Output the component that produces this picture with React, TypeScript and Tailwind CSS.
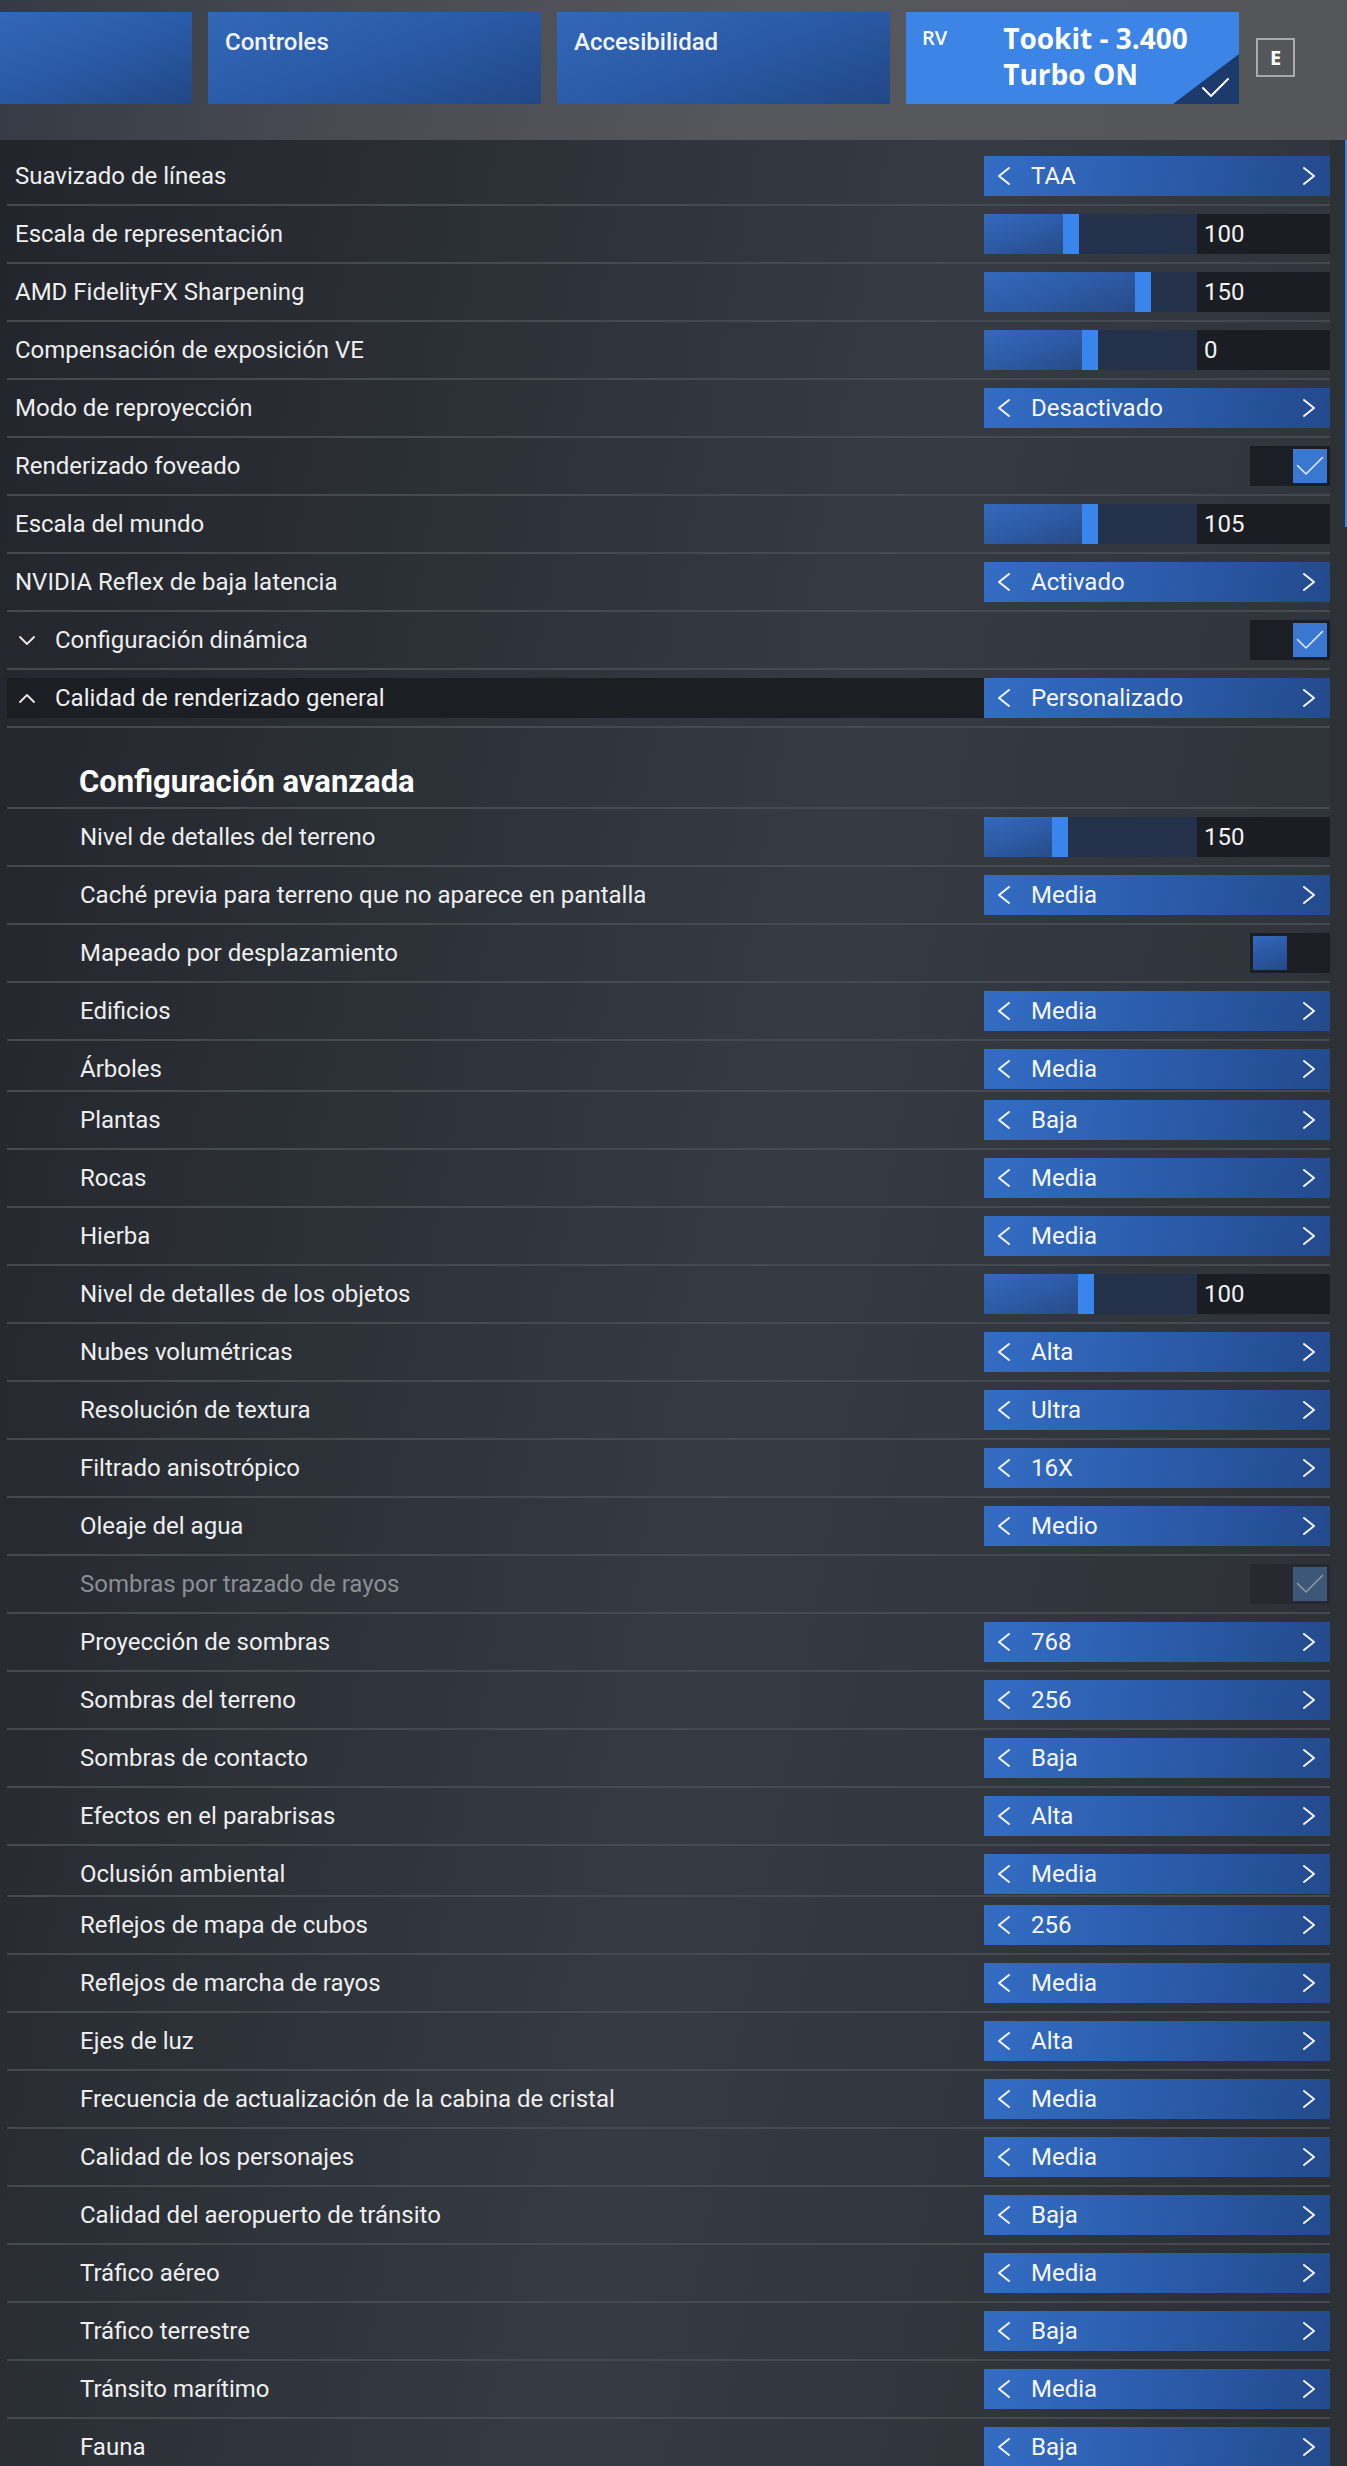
import React from 'react';

type Row =
  | { kind: 'select'; label: string; value: string; indent?: boolean; expand?: 'up' | 'down'; highlight?: boolean; cut?: boolean }
  | { kind: 'slider'; label: string; value: string; pos: number; indent?: boolean }
  | { kind: 'check'; label: string; checked: boolean; indent?: boolean; disabled?: boolean; expand?: 'up' | 'down' }
  | { kind: 'heading'; label: string };

const rows: Row[] = [
  { kind: 'select', label: 'Suavizado de líneas', value: 'TAA' },
  { kind: 'slider', label: 'Escala de representación', value: '100', pos: 79 },
  { kind: 'slider', label: 'AMD FidelityFX Sharpening', value: '150', pos: 151 },
  { kind: 'slider', label: 'Compensación de exposición VE', value: '0', pos: 98 },
  { kind: 'select', label: 'Modo de reproyección', value: 'Desactivado' },
  { kind: 'check', label: 'Renderizado foveado', checked: true },
  { kind: 'slider', label: 'Escala del mundo', value: '105', pos: 98 },
  { kind: 'select', label: 'NVIDIA Reflex de baja latencia', value: 'Activado' },
  { kind: 'check', label: 'Configuración dinámica', checked: true, expand: 'down' },
  { kind: 'select', label: 'Calidad de renderizado general', value: 'Personalizado', expand: 'up', highlight: true },
  { kind: 'heading', label: 'Configuración avanzada' },
  { kind: 'slider', label: 'Nivel de detalles del terreno', value: '150', pos: 68, indent: true },
  { kind: 'select', label: 'Caché previa para terreno que no aparece en pantalla', value: 'Media', indent: true },
  { kind: 'check', label: 'Mapeado por desplazamiento', checked: false, indent: true },
  { kind: 'select', label: 'Edificios', value: 'Media', indent: true },
  { kind: 'select', label: 'Árboles', value: 'Media', indent: true, cut: true },
  { kind: 'select', label: 'Plantas', value: 'Baja', indent: true },
  { kind: 'select', label: 'Rocas', value: 'Media', indent: true },
  { kind: 'select', label: 'Hierba', value: 'Media', indent: true },
  { kind: 'slider', label: 'Nivel de detalles de los objetos', value: '100', pos: 94, indent: true },
  { kind: 'select', label: 'Nubes volumétricas', value: 'Alta', indent: true },
  { kind: 'select', label: 'Resolución de textura', value: 'Ultra', indent: true },
  { kind: 'select', label: 'Filtrado anisotrópico', value: '16X', indent: true },
  { kind: 'select', label: 'Oleaje del agua', value: 'Medio', indent: true },
  { kind: 'check', label: 'Sombras por trazado de rayos', checked: true, indent: true, disabled: true },
  { kind: 'select', label: 'Proyección de sombras', value: '768', indent: true },
  { kind: 'select', label: 'Sombras del terreno', value: '256', indent: true },
  { kind: 'select', label: 'Sombras de contacto', value: 'Baja', indent: true },
  { kind: 'select', label: 'Efectos en el parabrisas', value: 'Alta', indent: true },
  { kind: 'select', label: 'Oclusión ambiental', value: 'Media', indent: true, cut: true },
  { kind: 'select', label: 'Reflejos de mapa de cubos', value: '256', indent: true },
  { kind: 'select', label: 'Reflejos de marcha de rayos', value: 'Media', indent: true },
  { kind: 'select', label: 'Ejes de luz', value: 'Alta', indent: true },
  { kind: 'select', label: 'Frecuencia de actualización de la cabina de cristal', value: 'Media', indent: true },
  { kind: 'select', label: 'Calidad de los personajes', value: 'Media', indent: true },
  { kind: 'select', label: 'Calidad del aeropuerto de tránsito', value: 'Baja', indent: true },
  { kind: 'select', label: 'Tráfico aéreo', value: 'Media', indent: true },
  { kind: 'select', label: 'Tráfico terrestre', value: 'Baja', indent: true },
  { kind: 'select', label: 'Tránsito marítimo', value: 'Media', indent: true },
  { kind: 'select', label: 'Fauna', value: 'Baja', indent: true },
];

const Chevron = ({ dir }: { dir: 'left' | 'right' }) => (
  <svg width="14" height="18" viewBox="0 0 14 18" fill="none" stroke="#f2f5fa" strokeWidth="2" strokeLinecap="round" strokeLinejoin="round">
    {dir === 'left' ? <polyline points="12,1 2,9 12,17" /> : <polyline points="2,1 12,9 2,17" />}
  </svg>
);

const Expand = ({ dir }: { dir: 'up' | 'down' }) => (
  <svg width="18" height="10" viewBox="0 0 18 10" fill="none" stroke="#e8e8e8" strokeWidth="1.8" strokeLinecap="round" strokeLinejoin="round">
    {dir === 'up' ? <polyline points="2,9 9,2 16,9" /> : <polyline points="2,2 9,9 16,2" />}
  </svg>
);

const Check = ({ color }: { color: string }) => (
  <svg width="34" height="34" viewBox="0 0 34 34" fill="none" stroke={color} strokeWidth="1.6" strokeLinecap="round" strokeLinejoin="round">
    <polyline points="4.5,16.5 13,25 29.5,8.5" />
  </svg>
);

const Select = ({ value }: { value: string }) => (
  <div className="w-[346px] h-10 shrink-0 flex items-center bg-[linear-gradient(100deg,#336dc4_0%,#2b5cab_50%,#234a8c_100%)] text-[#f4f6fa]">
    <div className="ml-[13px]">
      <Chevron dir="left" />
    </div>
    <span className="ml-[20px] text-[24px] leading-none">{value}</span>
    <div className="ml-auto mr-[14px]">
      <Chevron dir="right" />
    </div>
  </div>
);

const Slider = ({ value, pos }: { value: string; pos: number }) => (
  <div className="w-[346px] h-10 shrink-0 flex">
    <div className="w-[213px] h-full flex bg-[#24314a]">
      <div className="h-full bg-[linear-gradient(160deg,#3369bd_0%,#2d5ba6_50%,#274b86_100%)]" style={{ width: pos }} />
      <div className="w-4 h-full bg-[#3a85ec]" />
    </div>
    <div className="flex-1 h-full flex items-center pl-[7px] bg-[#1a1d23] text-[24px] text-[#f2f2f2]">{value}</div>
  </div>
);

const Toggle = ({ checked, disabled }: { checked: boolean; disabled?: boolean }) => (
  <div className={`w-20 h-10 shrink-0 flex p-[3px] ${checked ? 'justify-end' : 'justify-start'} ${disabled ? 'bg-[#262930]' : 'bg-[#1b1e24]'}`}>
    {checked ? (
      <div className={`w-[34px] h-[34px] ${disabled ? 'bg-[#3d5779]' : 'bg-[#3a77d0]'}`}>
        <Check color={disabled ? '#8e97a4' : '#dfe8f5'} />
      </div>
    ) : (
      <div className="w-[34px] h-[34px] bg-[linear-gradient(160deg,#3369bd_0%,#2a58a2_50%,#234987_100%)]" />
    )}
  </div>
);

const SettingRow = ({ row }: { row: Row }) => {
  if (row.kind === 'heading') {
    return (
      <div className="ml-[7px] h-[81px] flex items-end pb-[9px] pl-[72px] border-b-2 border-[#454950]">
        <span className="text-[31px] leading-8 font-bold text-white">{row.label}</span>
      </div>
    );
  }
  const cut = row.kind === 'select' && row.cut;
  const highlight = row.kind === 'select' && row.highlight;
  const expand = row.kind !== 'slider' ? row.expand : undefined;
  const disabled = row.kind === 'check' && row.disabled;
  return (
    <div className={`ml-[7px] flex items-start border-b-2 border-[#454950] pt-2 ${cut ? 'pb-px' : 'pb-2'}`}>
      <div className={`flex-1 h-10 flex items-center ${highlight ? 'bg-[#1b1e23]' : ''} ${row.indent ? 'pl-[73px]' : expand ? 'pl-[11px]' : 'pl-2'}`}>
        {expand && (
          <div className="w-[37px] shrink-0">
            <Expand dir={expand} />
          </div>
        )}
        <span className={`text-[24px] leading-none ${disabled ? 'text-[#8b8e94]' : 'text-[#eeeeee]'}`}>{row.label}</span>
      </div>
      {row.kind === 'select' && <Select value={row.value} />}
      {row.kind === 'slider' && <Slider value={row.value} pos={row.pos} />}
      {row.kind === 'check' && <Toggle checked={row.checked} disabled={row.disabled} />}
    </div>
  );
};

const Tab = ({ label, className }: { label: string; className: string }) => (
  <div className={`h-[92px] bg-[linear-gradient(160deg,#3268b8_0%,#2a5aa6_50%,#214785_100%)] px-[17px] pt-[18px] ${className}`}>
    <span className="text-[24px] leading-none font-medium text-[#f0f3f8]">{label}</span>
  </div>
);

export default function App() {
  return (
    <div className="w-[1347px] h-[2466px] overflow-hidden flex flex-col font-['Roboto','Liberation_Sans',sans-serif] bg-[#2c2f35]">
      <header className="h-[140px] shrink-0 pt-3 flex items-start gap-4 bg-[linear-gradient(100deg,#353a44_0%,#474a51_25%,#55575c_55%,#545659_100%)]">
        <Tab label="" className="w-[192px]" />
        <Tab label="Controles" className="w-[333px]" />
        <Tab label="Accesibilidad" className="w-[333px]" />
        <div className="relative w-[333px] h-[92px] bg-[#3c84e6] flex font-['Open_Sans','Liberation_Sans',sans-serif] text-white overflow-hidden">
          <span className="ml-4 mt-[16px] text-[20px] leading-none font-semibold">RV</span>
          <div className="ml-[56px] mt-[8px] text-[28px] leading-9 font-bold">
            <div>Tookit - 3.400</div>
            <div>Turbo ON</div>
          </div>
          <svg className="absolute right-0 bottom-0" width="66" height="50" viewBox="0 0 66 50">
            <polygon points="66,0 66,50 0,50" fill="#1d3a6c" />
            <polyline points="30,34 38,42 55,25" fill="none" stroke="#ffffff" strokeWidth="2" strokeLinecap="round" strokeLinejoin="round" />
          </svg>
        </div>
        <div className="ml-[1px] mt-[26px] w-[39px] h-[39px] border-2 border-[#a9abae] flex items-center justify-center font-['Open_Sans','Liberation_Sans',sans-serif] text-[20px] font-bold text-white">
          E
        </div>
      </header>
      <div className="flex-1 flex">
        <main className="w-[1330px] pt-2 bg-[linear-gradient(100deg,#22252b_0%,#2c3037_30%,#363a42_55%,#30343b_80%,#2b2e34_100%)]">
          {rows.map((row, i) => (
            <SettingRow key={i} row={row} />
          ))}
        </main>
        <div className="w-[17px] flex justify-end bg-[#2d3035]">
          <div className="w-[2px] h-[387px] bg-[#3a85ec]" />
        </div>
      </div>
    </div>
  );
}
